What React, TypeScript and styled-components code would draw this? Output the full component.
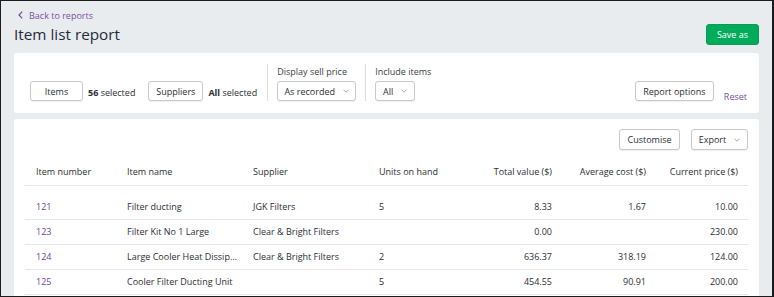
import React from 'react';
import styled, { createGlobalStyle } from 'styled-components';

const GlobalStyle = createGlobalStyle`
  html, body {
    margin: 0;
    padding: 0;
    height: 100%;
  }
  body {
    background: #e9ecef;
    font-family: 'Open Sans', 'Noto Sans', sans-serif;
    color: #2b2f33;
    overflow: hidden;
  }
`;

const Frame = styled.div`
  box-sizing: border-box;
  width: 774px;
  height: 297px;
  border: 1px solid #1c1c1c;
  border-right-width: 2px;
  padding: 7px 13px 0 13px;
  overflow: hidden;
`;

const Header = styled.div`
  display: flex;
  justify-content: space-between;
  align-items: flex-end;
  height: 38px;
  margin-bottom: 7px;
`;

const TitleBlock = styled.div`
  display: flex;
  flex-direction: column;
`;

const BackLink = styled.a`
  display: flex;
  align-items: center;
  gap: 6px;
  margin-left: 4px;
  font-size: 9px;
  color: #7a4ea8;
  text-decoration: none;
  height: 14px;
`;

const Title = styled.h1`
  margin: 1px 0 0 0;
  font-size: 15.3px;
  font-weight: 400;
  color: #1f2b3a;
  line-height: 23px;
`;

const PrimaryButton = styled.button`
  width: 53px;
  height: 21px;
  border: 1px solid #0f9a52;
  border-radius: 3px;
  background: #00ab5c;
  color: #fff;
  font-family: inherit;
  font-size: 9px;
  padding: 0;
  margin-bottom: 1px;
`;

const Card = styled.div`
  background: #fff;
  border-radius: 3px;
`;

const FilterCard = styled(Card)`
  height: 60px;
  box-sizing: border-box;
  display: flex;
  align-items: flex-end;
  padding: 0 12px 12px 16px;
`;

const FilterGroup = styled.div`
  display: flex;
  align-items: center;
  gap: 5px;
  margin-right: 13px;
`;

const Button = styled.button<{ $w?: number }>`
  box-sizing: border-box;
  width: ${(p) => (p.$w ? `${p.$w}px` : 'auto')};
  height: 20px;
  padding: 0;
  display: inline-flex;
  align-items: center;
  justify-content: center;
  gap: 8px;
  white-space: nowrap;
  border: 1px solid #c7c9cc;
  border-radius: 3px;
  background: #fff;
  box-shadow: 0 1px 1px rgba(0, 0, 0, 0.06);
  font-family: inherit;
  font-size: 9px;
  color: #2b2f33;
`;

const Count = styled.span`
  font-size: 9px;
  color: #2b2f33;
  white-space: nowrap;
  position: relative;
  top: 1px;
  b {
    font-weight: 700;
  }
`;

const Divider = styled.div<{ $ml?: number }>`
  align-self: stretch;
  width: 1px;
  background: #dcdee1;
  margin: 11px 9px 0 ${(p) => p.$ml ?? 0}px;
`;

const Field = styled.div`
  display: flex;
  flex-direction: column;
  gap: 3px;
  margin-right: 9px;
`;

const Label = styled.span`
  font-size: 9px;
  color: #3a3f45;
  line-height: 13px;
`;

const Spacer = styled.div`
  flex: 1;
`;

const ResetLink = styled.a`
  font-size: 9px;
  color: #7a4ea8;
  margin: 0 0 0 10px;
  position: relative;
  top: 2px;
`;

const TableCard = styled(Card)`
  margin-top: 6px;
  padding: 10px 11px 0 11px;
  height: 200px;
`;

const Toolbar = styled.div`
  display: flex;
  justify-content: flex-end;
  gap: 11px;
  height: 21px;
  button {
    height: 21px;
  }
`;

const Table = styled.table`
  width: 723px;
  border-collapse: collapse;
  table-layout: fixed;
  font-size: 9px;
`;

const Th = styled.th<{ $right?: boolean; $w: number }>`
  box-sizing: border-box;
  width: ${(p) => p.$w}px;
  font-weight: 400;
  text-align: ${(p) => (p.$right ? 'right' : 'left')};
  padding: 0 ${(p) => (p.$right ? 10 : 3)}px 6px 11px;
  height: 35px;
  vertical-align: bottom;
  line-height: 14px;
  color: #2b2f33;
  border-bottom: 1px solid #e4e6e8;
  white-space: nowrap;
`;

const Td = styled.td<{ $right?: boolean; $link?: boolean }>`
  box-sizing: border-box;
  text-align: ${(p) => (p.$right ? 'right' : 'left')};
  padding: 0 ${(p) => (p.$right ? 10 : 3)}px 0 11px;
  height: 25px;
  line-height: 14px;
  color: ${(p) => (p.$link ? '#6c45a0' : '#2b2f33')};
  border-bottom: 1px solid #e4e6e8;
  white-space: nowrap;
  overflow: hidden;
  text-overflow: ellipsis;
`;

const FirstRow = styled.tr`
  td {
    height: 34px;
    padding-top: 10px;
  }
`;

const Chevron = ({ color = '#9aa0a6' }: { color?: string }) => (
  <svg width="6" height="4" viewBox="0 0 6 4" fill="none">
    <path d="M0.5 0.7 L3 3.2 L5.5 0.7" stroke={color} strokeWidth="0.9" />
  </svg>
);

const BackChevron = () => (
  <svg width="5" height="8" viewBox="0 0 5 8" fill="none">
    <path d="M4.2 0.6 L1 4 L4.2 7.4" stroke="#7a4ea8" strokeWidth="1.3" />
  </svg>
);

const columns = [
  { key: 'num', label: 'Item number', w: 91 },
  { key: 'name', label: 'Item name', w: 126 },
  { key: 'supplier', label: 'Supplier', w: 126 },
  { key: 'units', label: 'Units on hand', w: 98 },
  { key: 'total', label: 'Total value ($)', w: 96, right: true },
  { key: 'avg', label: 'Average cost ($)', w: 94, right: true },
  { key: 'price', label: 'Current price ($)', w: 92, right: true },
];

const rows = [
  { num: '121', name: 'Filter ducting', supplier: 'JGK Filters', units: '5', total: '8.33', avg: '1.67', price: '10.00' },
  { num: '123', name: 'Filter Kit No 1 Large', supplier: 'Clear & Bright Filters', units: '', total: '0.00', avg: '', price: '230.00' },
  { num: '124', name: 'Large Cooler Heat Dissipator Unit', supplier: 'Clear & Bright Filters', units: '2', total: '636.37', avg: '318.19', price: '124.00' },
  { num: '125', name: 'Cooler Filter Ducting Unit', supplier: '', units: '5', total: '454.55', avg: '90.91', price: '200.00' },
];

const App = () => {
  return (
    <>
      <GlobalStyle />
      <Frame>
        <Header>
          <TitleBlock>
            <BackLink href="#">
              <BackChevron />
              Back to reports
            </BackLink>
            <Title>Item list report</Title>
          </TitleBlock>
          <PrimaryButton>Save as</PrimaryButton>
        </Header>

        <FilterCard>
          <FilterGroup>
            <Button $w={53}>Items</Button>
            <Count>
              <b>56</b> selected
            </Count>
          </FilterGroup>
          <FilterGroup>
            <Button $w={55}>Suppliers</Button>
            <Count>
              <b>All</b> selected
            </Count>
          </FilterGroup>
          <Divider $ml={-3} />
          <Field>
            <Label>Display sell price</Label>
            <Button $w={79}>
              As recorded <Chevron />
            </Button>
          </Field>
          <Divider />
          <Field>
            <Label>Include items</Label>
            <Button $w={40}>
              All <Chevron />
            </Button>
          </Field>
          <Spacer />
          <Button $w={79}>Report options</Button>
          <ResetLink>Reset</ResetLink>
        </FilterCard>

        <TableCard>
          <Toolbar>
            <Button $w={61}>Customise</Button>
            <Button $w={57}>
              Export <Chevron />
            </Button>
          </Toolbar>
          <Table>
            <thead>
              <tr>
                {columns.map((c) => (
                  <Th key={c.key} $w={c.w} $right={c.right}>
                    {c.label}
                  </Th>
                ))}
              </tr>
            </thead>
            <tbody>
              {rows.map((r, i) => {
                const cells = columns.map((c) => (
                  <Td key={c.key} $right={c.right} $link={c.key === 'num'}>
                    {r[c.key as keyof typeof r]}
                  </Td>
                ));
                return i === 0 ? <FirstRow key={r.num}>{cells}</FirstRow> : <tr key={r.num}>{cells}</tr>;
              })}
            </tbody>
          </Table>
        </TableCard>
      </Frame>
    </>
  );
};

export default App;
